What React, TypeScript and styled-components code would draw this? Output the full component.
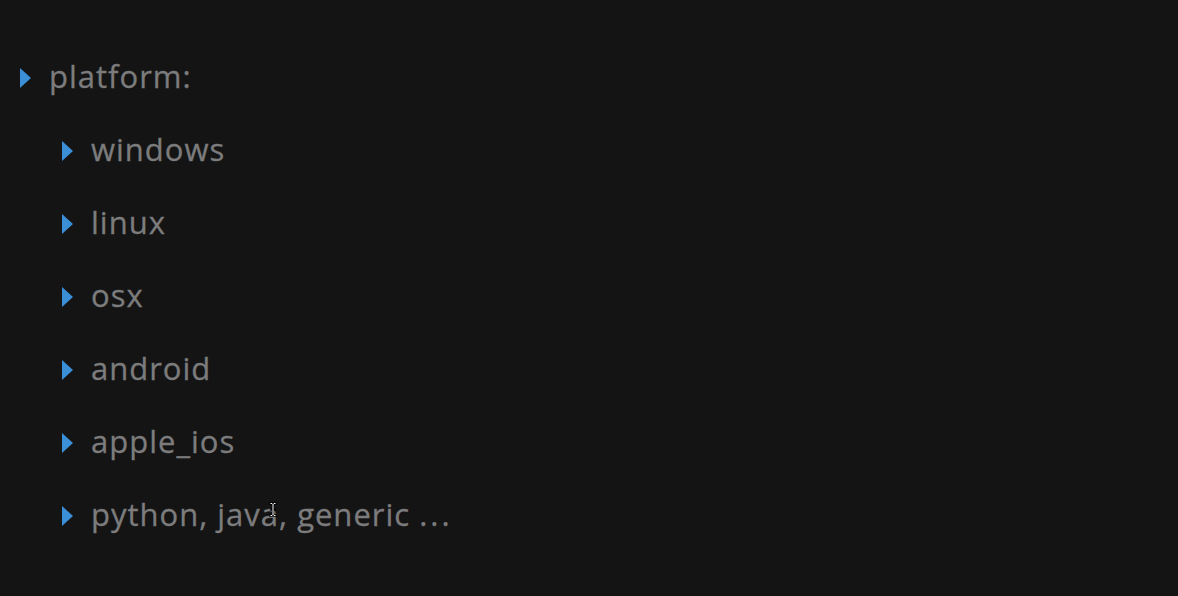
import React from "react";
import styled, { createGlobalStyle } from "styled-components";

const Global = createGlobalStyle`
  html, body { margin: 0; padding: 0; background: #141415; }
  body { font-family: "Open Sans", Lato, sans-serif; }
`;

const Page = styled.div`
  position: relative;
  width: 1178px;
  height: 596px;
  background: #141415;
  box-sizing: border-box;
  padding: 41px 0 0 20px;
  overflow: hidden;
`;

const Tree = styled.ul`
  list-style: none;
  margin: 0;
  padding: 0;
`;

const Children = styled.ul`
  list-style: none;
  margin: 0;
  padding: 0 0 0 42px;
`;

const Row = styled.li`
  display: flex;
  align-items: center;
  height: 73px;
  gap: 18px;
`;

const Label = styled.span`
  color: #7c7c7d;
  font-size: 31px;
  letter-spacing: 1px;
  line-height: 1;
  position: relative;
  top: -1px;
  white-space: pre;
  -webkit-text-stroke: 0.3px #7c7c7d;
`;

const Dots = styled.span`
  letter-spacing: 3px;
`;

const Caret = styled.svg`
  width: 11px;
  height: 20px;
  flex: none;
  display: block;
`;

const Cursor = styled.svg`
  position: absolute;
  left: 269px;
  top: 502px;
  width: 8px;
  height: 15px;
`;

const Arrow = () => (
  <Caret viewBox="0 0 11 20">
    <path d="M0 0 L11 10 L0 20 Z" fill="#3b8fd6" />
  </Caret>
);

const IBeam = () => (
  <Cursor viewBox="0 0 8 15">
    <path
      d="M1.5 1.5 H3 L4 2.5 L5 1.5 H6.5 M4 2.5 V12.5 M1.5 13.5 H3 L4 12.5 L5 13.5 H6.5 M2.5 7.5 H5.5"
      stroke="#000"
      strokeWidth="2.4"
      fill="none"
      strokeLinecap="square"
    />
    <path
      d="M1.5 1.5 H3 L4 2.5 L5 1.5 H6.5 M4 2.5 V12.5 M1.5 13.5 H3 L4 12.5 L5 13.5 H6.5"
      stroke="#fff"
      strokeWidth="1"
      fill="none"
    />
  </Cursor>
);

const items: React.ReactNode[] = [
  "windows",
  "linux",
  "osx",
  "android",
  "apple_ios",
  <>
    python, java, generic <Dots>...</Dots>
  </>,
];

export default function App() {
  return (
    <>
      <Global />
      <Page>
        <Tree>
          <Row>
            <Arrow />
            <Label>platform:</Label>
          </Row>
          <li>
            <Children>
              {items.map((t, i) => (
                <Row key={i}>
                  <Arrow />
                  <Label>{t}</Label>
                </Row>
              ))}
            </Children>
          </li>
        </Tree>
        <IBeam />
      </Page>
    </>
  );
}
